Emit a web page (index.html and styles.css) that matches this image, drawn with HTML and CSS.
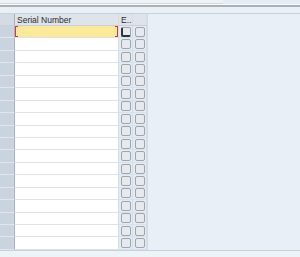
FILE: index.html
```html
<!DOCTYPE html>
<html lang="en">
<head>
  <meta charset="UTF-8">
  <title>Serial Numbers</title>
  <link rel="stylesheet" href="styles.css">
</head>
<body>
  <div class="toolbar">
    <div class="tabstrip"><div class="tabbox"></div></div>
    <div class="divider"></div>
    <div class="gap"></div>
  </div>
  <div class="content">
    <div class="grid" id="grid">
      <div class="row head">
        <div class="rh"></div>
        <div class="cell">Serial Number</div>
        <div class="cell chk">E...</div>
        <div class="cell chk"></div>
      </div>
    </div>
  </div>
  <div class="footer"></div>

  <script>
    // build the 18 empty input rows
    var grid = document.getElementById("grid");
    for (var i = 0; i < 18; i++) {
      var row = document.createElement("div");
      row.className = "row";
      var first = i === 0 ? " focus" : "";
      row.innerHTML =
        '<div class="rh"></div>' +
        '<div class="cell input' + first + '"></div>' +
        '<div class="cell chk"><span class="box' + (i === 0 ? ' active' : '') + '"></span></div>' +
        '<div class="cell chk"><span class="box"></span></div>';
      grid.appendChild(row);
    }
  </script>
</body>
</html>
```

FILE: styles.css
```css
body {
  margin: 0;
  background-color: #e9eff7;
  font-family: "Liberation Sans", Arial, sans-serif;
  font-size: 8.5px;
  color: #2b2b2b;
  height: 257px;
  overflow: hidden;
}
.toolbar {
  height: 14px;
}
.tabstrip {
  height: 5px;
  background: #e6ecf3;
  border-bottom: 1px solid #f7f9fb;
  box-sizing: border-box;
}
.tabbox {
  width: 223px;
  height: 4px;
  background: #eef2f7;
  border-bottom: 1px solid #d3dae2;
  box-sizing: border-box;
}
.divider {
  height: 2px;
  background: #a9b0b7;
}
.gap {
  height: 6px;
  background: #eaf0f6;
  border-bottom: 1px solid #c6d1dc;
}
.content {
  height: 236px;
}
.grid {
  width: 148px;
  border-right: 1px solid #d3dce6;
  box-sizing: border-box;
}
.row {
  display: grid;
  grid-template-columns: 15px 104px 14px 14px;
  height: 12.45px;
}
.row.head {
  height: 12px;
  background: #dfe4ea;
  border-bottom: 1px solid #c9d0d8;
  box-sizing: border-box;
}
.rh {
  background: #cad4df;
  border-right: 1px solid #a7b3c0;
  border-bottom: 1px solid #dfe6ee;
  box-sizing: border-box;
}
.head .rh {
  background: #d5dbe2;
  border-bottom: none;
}
.cell {
  border-right: 1px solid #d6dce3;
  box-sizing: border-box;
  padding-left: 2px;
  padding-top: 1px;
  line-height: 10px;
  white-space: nowrap;
  overflow: hidden;
}
.input {
  background: #fff;
  border-bottom: 1px solid #dfe2e7;
}
.input.focus {
  background: #fde99b;
  position: relative;
}
.input.focus::before,
.input.focus::after {
  content: "";
  position: absolute;
  top: 0;
  bottom: 0;
  width: 2px;
  border-top: 1px solid #d9363e;
  border-bottom: 1px solid #d9363e;
}
.input.focus::before {
  left: 0;
  border-left: 1px solid #d9363e;
}
.input.focus::after {
  right: 0;
  border-right: 1px solid #d9363e;
}
.chk {
  background: #e3ebf4;
  display: flex;
  align-items: center;
  justify-content: center;
  padding: 0;
  border-bottom: 1px solid #d9e1ea;
}
.head .chk {
  justify-content: flex-start;
  align-items: flex-start;
  padding: 1px 0 0 2px;
  background: #dfe4ea;
  border-bottom: none;
}
.box {
  width: 10px;
  height: 10px;
  border: 1px solid #9fa5ab;
  border-radius: 2px;
  background: #e6eaee;
  box-sizing: border-box;
}
.box.active {
  border-left-color: #333;
  border-bottom-color: #333;
  border-width: 1px 1px 2px 2px;
}
.footer {
  height: 7px;
  background: #eef3f8;
  border-top: 1px solid #c6d1dc;
}
```
